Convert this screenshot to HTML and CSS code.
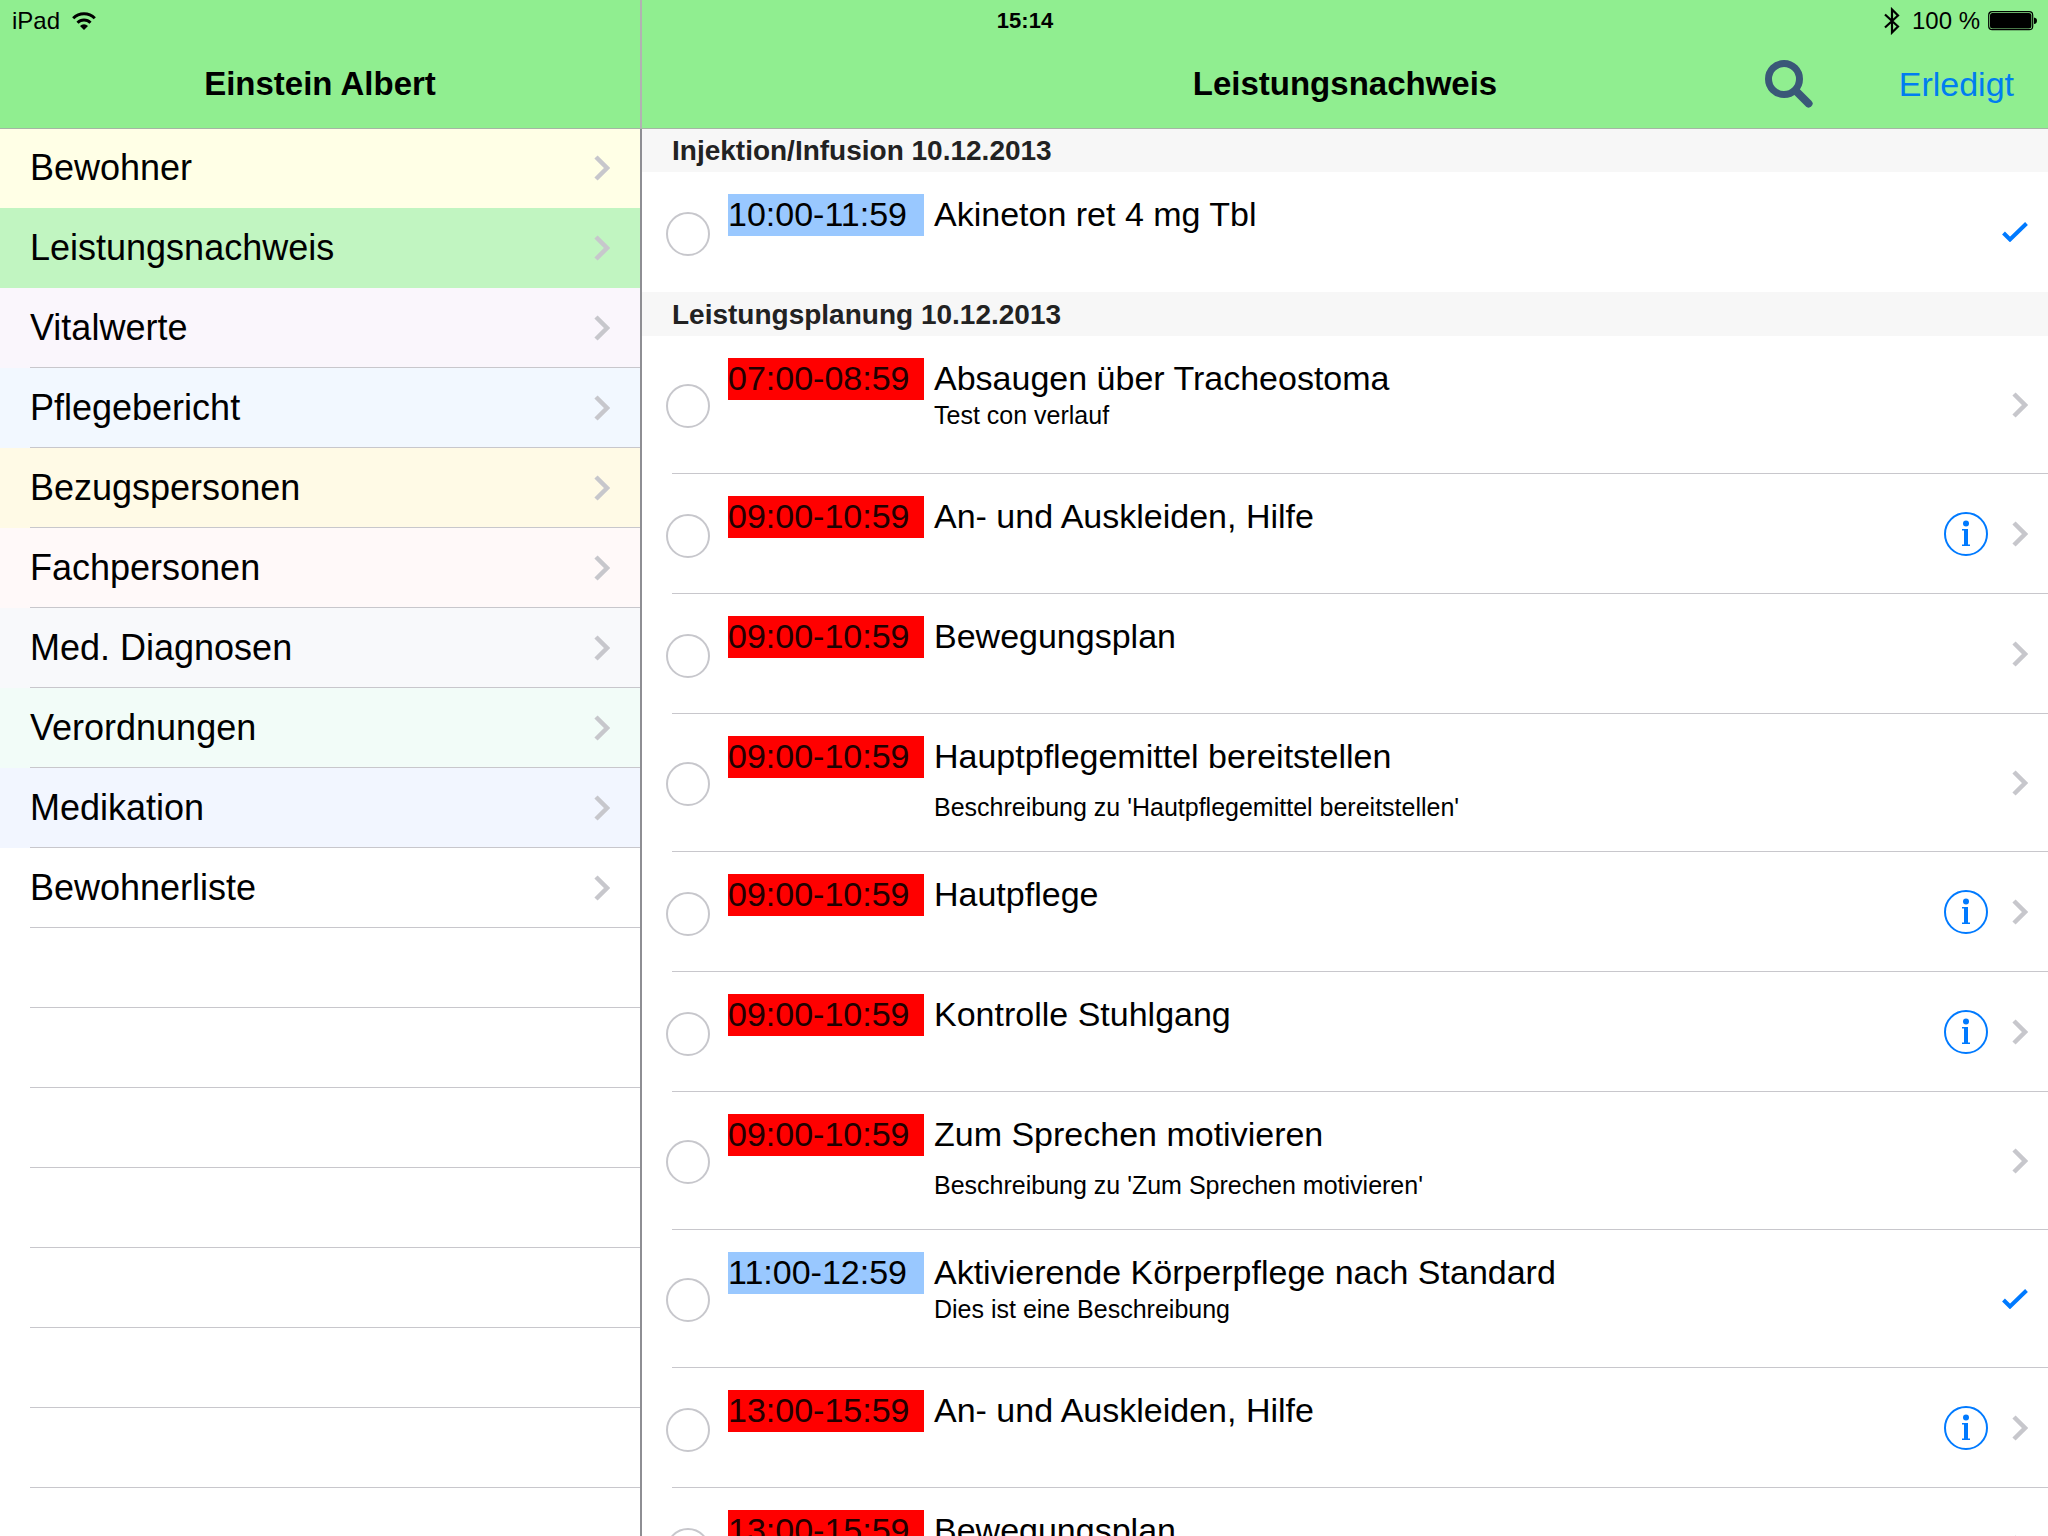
FILE: index.html
```html
<!DOCTYPE html>
<html lang="de">
<head>
<meta charset="utf-8">
<meta name="viewport" content="width=device-width, initial-scale=1">
<title>Leistungsnachweis</title>
<link rel="stylesheet" href="styles.css">
</head>
<body>
<svg class="sprite" aria-hidden="true">
  <symbol id="chevron" viewBox="0 0 16 26"><path d="M2 2l11 11L2 24" fill="none" stroke="currentColor" stroke-width="4.500"/></symbol>
  <symbol id="check" viewBox="0 0 26 20"><path d="M1.500 11l6.500 6.500L24.500 1.500" fill="none" stroke="currentColor" stroke-width="4"/></symbol>
  <symbol id="info" viewBox="0 0 44 44"><circle cx="22" cy="22" r="21" fill="none" stroke="currentColor" stroke-width="2"/><circle cx="22" cy="11.500" r="3" fill="currentColor"/><path d="M18 17h6v15.500h2V34h-8v-1.500h2V18.500h-2z" fill="currentColor"/></symbol>
</svg>

<div class="status">
  <div class="status-left">
    <span>iPad</span>
    <svg class="wifi" viewBox="0 0 24 18" aria-label="WLAN"><path d="M1.200 6.200a15.300 15.300 0 0 1 21.600 0M5.500 10.800a9.200 9.200 0 0 1 13 0" fill="none" stroke="#000" stroke-width="3"/><path d="M12 18l-4-4a5.700 5.700 0 0 1 8 0z"/></svg>
  </div>
  <time class="clock">15:14</time>
  <div class="status-right">
    <svg class="bluetooth" viewBox="0 0 16 28" aria-label="Bluetooth"><path d="M1 7.500l13 12L8 25.500V2.500l6 6-13 12" fill="none" stroke="#000" stroke-width="2.200"/></svg>
    <span>100 %</span>
    <svg class="battery" viewBox="0 0 50 20" aria-label="Batterie"><rect x=".7" y=".7" width="44" height="18" rx="3.500" fill="none" stroke="#000" stroke-width="1.200"/><rect x="2" y="2" width="41.400" height="15.400" rx="2.500"/><path d="M46 6.500q3 .5 3 3.300t-3 3.300z"/></svg>
  </div>
</div>

<div class="split">
  <aside class="sidebar">
    <header class="bar"><h2 class="bar-title">Einstein Albert</h2></header>
    <nav class="scroll">
      <ul class="menu">
        <li class="menu-row resident"><a href="#">Bewohner<svg class="chevron"><use href="#chevron"/></svg></a></li>
        <li class="menu-row selected"><a href="#" aria-current="page">Leistungsnachweis<svg class="chevron"><use href="#chevron"/></svg></a></li>
        <li class="menu-row vitals"><a href="#">Vitalwerte<svg class="chevron"><use href="#chevron"/></svg></a></li>
        <li class="menu-row report"><a href="#">Pflegebericht<svg class="chevron"><use href="#chevron"/></svg></a></li>
        <li class="menu-row contacts"><a href="#">Bezugspersonen<svg class="chevron"><use href="#chevron"/></svg></a></li>
        <li class="menu-row experts"><a href="#">Fachpersonen<svg class="chevron"><use href="#chevron"/></svg></a></li>
        <li class="menu-row diagnoses"><a href="#">Med. Diagnosen<svg class="chevron"><use href="#chevron"/></svg></a></li>
        <li class="menu-row orders"><a href="#">Verordnungen<svg class="chevron"><use href="#chevron"/></svg></a></li>
        <li class="menu-row medication"><a href="#">Medikation<svg class="chevron"><use href="#chevron"/></svg></a></li>
        <li class="menu-row"><a href="#">Bewohnerliste<svg class="chevron"><use href="#chevron"/></svg></a></li>
        <li class="menu-row" aria-hidden="true"></li>
        <li class="menu-row" aria-hidden="true"></li>
        <li class="menu-row" aria-hidden="true"></li>
        <li class="menu-row" aria-hidden="true"></li>
        <li class="menu-row" aria-hidden="true"></li>
        <li class="menu-row" aria-hidden="true"></li>
        <li class="menu-row" aria-hidden="true"></li>
        <li class="menu-row" aria-hidden="true"></li>
      </ul>
    </nav>
  </aside>

  <main class="detail">
    <header class="bar">
      <h1 class="bar-title">Leistungsnachweis</h1>
      <div class="bar-actions">
        <button class="search" type="button" aria-label="Suchen"><svg viewBox="0 0 48 48"><circle cx="19" cy="19" r="15.500" fill="none" stroke="#3a5878" stroke-width="7"/><path d="M31 31l12.500 12.500" fill="none" stroke="#3a5878" stroke-width="8" stroke-linecap="round"/></svg></button>
        <button class="done" type="button">Erledigt</button>
      </div>
    </header>
    <div class="scroll">
      <section>
        <h2 class="group-title">Injektion/Infusion 10.12.2013</h2>
        <ul class="tasks">
          <li class="task">
            <input class="tick" type="checkbox" id="t1">
            <label class="task-text" for="t1"><span class="slot ok">10:00-11:59</span><span class="name">Akineton ret 4 mg Tbl</span></label>
            <svg class="check" role="img" aria-label="Erledigt"><use href="#check"/></svg>
          </li>
        </ul>
      </section>
      <section>
        <h2 class="group-title">Leistungsplanung 10.12.2013</h2>
        <ul class="tasks">
          <li class="task tall">
            <input class="tick" type="checkbox" id="t2">
            <label class="task-text" for="t2"><span class="slot">07:00-08:59</span><span class="name">Absaugen über Tracheostoma</span><span class="note">Test con verlauf</span></label>
            <svg class="chevron"><use href="#chevron"/></svg>
          </li>
          <li class="task">
            <input class="tick" type="checkbox" id="t3">
            <label class="task-text" for="t3"><span class="slot">09:00-10:59</span><span class="name">An- und Auskleiden, Hilfe</span></label>
            <button class="info" type="button" aria-label="Info"><svg><use href="#info"/></svg></button>
            <svg class="chevron"><use href="#chevron"/></svg>
          </li>
          <li class="task">
            <input class="tick" type="checkbox" id="t4">
            <label class="task-text" for="t4"><span class="slot">09:00-10:59</span><span class="name">Bewegungsplan</span></label>
            <svg class="chevron"><use href="#chevron"/></svg>
          </li>
          <li class="task tall">
            <input class="tick" type="checkbox" id="t5">
            <label class="task-text" for="t5"><span class="slot">09:00-10:59</span><span class="name">Hauptpflegemittel bereitstellen</span><span class="note apart">Beschreibung zu 'Hautpflegemittel bereitstellen'</span></label>
            <svg class="chevron"><use href="#chevron"/></svg>
          </li>
          <li class="task">
            <input class="tick" type="checkbox" id="t6">
            <label class="task-text" for="t6"><span class="slot">09:00-10:59</span><span class="name">Hautpflege</span></label>
            <button class="info" type="button" aria-label="Info"><svg><use href="#info"/></svg></button>
            <svg class="chevron"><use href="#chevron"/></svg>
          </li>
          <li class="task">
            <input class="tick" type="checkbox" id="t7">
            <label class="task-text" for="t7"><span class="slot">09:00-10:59</span><span class="name">Kontrolle Stuhlgang</span></label>
            <button class="info" type="button" aria-label="Info"><svg><use href="#info"/></svg></button>
            <svg class="chevron"><use href="#chevron"/></svg>
          </li>
          <li class="task tall">
            <input class="tick" type="checkbox" id="t8">
            <label class="task-text" for="t8"><span class="slot">09:00-10:59</span><span class="name">Zum Sprechen motivieren</span><span class="note apart">Beschreibung zu 'Zum Sprechen motivieren'</span></label>
            <svg class="chevron"><use href="#chevron"/></svg>
          </li>
          <li class="task tall">
            <input class="tick" type="checkbox" id="t9">
            <label class="task-text" for="t9"><span class="slot ok">11:00-12:59</span><span class="name">Aktivierende Körperpflege nach Standard</span><span class="note">Dies ist eine Beschreibung</span></label>
            <svg class="check" role="img" aria-label="Erledigt"><use href="#check"/></svg>
          </li>
          <li class="task">
            <input class="tick" type="checkbox" id="t10">
            <label class="task-text" for="t10"><span class="slot">13:00-15:59</span><span class="name">An- und Auskleiden, Hilfe</span></label>
            <button class="info" type="button" aria-label="Info"><svg><use href="#info"/></svg></button>
            <svg class="chevron"><use href="#chevron"/></svg>
          </li>
          <li class="task">
            <input class="tick" type="checkbox" id="t11">
            <label class="task-text" for="t11"><span class="slot">13:00-15:59</span><span class="name">Bewegungsplan</span></label>
            <svg class="chevron"><use href="#chevron"/></svg>
          </li>
        </ul>
      </section>
    </div>
  </main>
</div>
</body>
</html>
```
FILE: styles.css
```css
* {
  box-sizing: border-box;
}

body {
  margin: 0;
  background: #fff;
  color: #000;
  font: 34px/42px "Liberation Sans", Arial, sans-serif;
}

h1, h2, ul {
  margin: 0;
  padding: 0;
}

ul {
  list-style: none;
}

button {
  padding: 0;
  border: 0;
  background: none;
  font: inherit;
  cursor: pointer;
}

svg {
  display: block;
}

.sprite {
  display: none;
}

/* Status bar, floating over both navigation bars */
.status {
  position: absolute;
  z-index: 2;
  top: 0;
  left: 0;
  right: 0;
  display: grid;
  grid-template-columns: 1fr auto 1fr;
  align-items: center;
  height: 40px;
  padding: 0 10px 0 12px;
  font-size: 24px;
  line-height: 42px;
}

.status-left,
.status-right {
  display: flex;
  align-items: center;
}

.status-left {
  gap: 12px;
}

.status-right {
  justify-content: flex-end;
  gap: 8px;
}

.clock {
  font-size: 22px;
  font-weight: bold;
}

.wifi {
  width: 24px;
  height: 18px;
}

.bluetooth {
  width: 16px;
  height: 28px;
  margin-right: 4px;
}

.battery {
  width: 50px;
  height: 20px;
}

/* Split view */
.split {
  display: grid;
  grid-template-columns: 5fr 11fr;
  height: 100vh;
}

.sidebar,
.detail {
  display: flex;
  flex-direction: column;
  min-width: 0;
  min-height: 0;
}

.detail {
  border-left: 2px solid #8e8e93;
}

.scroll {
  flex: 1;
  min-height: 0;
  overflow-y: auto;
  scrollbar-width: none;
}

.bar {
  position: relative;
  z-index: 1;
  display: grid;
  grid-template-columns: 1fr auto 1fr;
  align-items: center;
  flex: none;
  height: 128px;
  padding: 40px 34px 0 0;
  background: #90ee90;
  box-shadow: 0 1px #a5b5a5;
}

.sidebar .bar {
  padding-right: 0;
}

.detail .bar {
  margin-left: -2px;
  border-left: 2px solid #b2b2b2;
  padding-left: 34px;
}

.bar-title {
  grid-column: 2;
  font-size: 33px;
  font-weight: bold;
  line-height: 44px;
}

.bar-actions {
  display: flex;
  align-items: center;
  justify-content: flex-end;
  gap: 86px;
}

.search svg {
  width: 48px;
  height: 48px;
}

.done {
  color: #007df0;
}

/* Menu */
.menu-row {
  height: 80px;
  font-size: 36px;
  background: linear-gradient(#c8c7cc, #c8c7cc) 30px 100% / 100% 1px no-repeat;
}

.menu-row a {
  display: flex;
  align-items: center;
  justify-content: space-between;
  height: 100%;
  padding: 0 30px;
  color: inherit;
  text-decoration: none;
}

.menu-row.resident,
.menu-row.selected {
  background-image: none;
}

.resident { background-color: #ffffe6; }
.selected { background-color: #c1f5c1; }
.vitals { background-color: #faf6fc; }
.report { background-color: #f2f8ff; }
.contacts { background-color: #fffae6; }
.experts { background-color: #fff9f9; }
.diagnoses { background-color: #f8f9fb; }
.orders { background-color: #f2fcf8; }
.medication { background-color: #f2f6ff; }

.chevron {
  flex: none;
  width: 16px;
  height: 26px;
  color: #c7c7cc;
}

/* Task list */
.group-title {
  height: 44px;
  padding-left: 30px;
  background: #f7f7f7;
  color: #222;
  font-size: 28px;
  font-weight: bold;
  line-height: 46px;
}

.task {
  display: flex;
  align-items: center;
  min-height: 120px;
  padding: 0 20px 0 24px;
  background: linear-gradient(#c8c7cc, #c8c7cc) 30px 100% / 100% 1px no-repeat;
}

.task.tall {
  min-height: 138px;
}

.task:only-child {
  background: none;
}

.tick {
  appearance: none;
  flex: none;
  width: 44px;
  height: 44px;
  margin: 4px 18px 0 0;
  border: 2px solid #c7c7cc;
  border-radius: 50%;
}

.tall .tick {
  margin-top: 2px;
}

.tick:checked {
  background: #007aff;
}

.task-text {
  display: grid;
  grid-template-columns: 196px 1fr;
  column-gap: 10px;
  align-self: flex-start;
  flex: 1;
  min-width: 0;
  padding-top: 22px;
}

.slot {
  height: 42px;
  background: #f00;
  color: #200;
  line-height: 40px;
}

.slot.ok {
  background: #99c8ff;
  color: #000;
}

.name {
  line-height: 40px;
}

.note {
  grid-column: 2;
  font-size: 25px;
  line-height: 30px;
}

.note.apart {
  margin-top: 14px;
}

.info {
  margin-right: 24px;
  color: #007aff;
}

.info svg {
  width: 44px;
  height: 44px;
}

.check {
  flex: none;
  width: 26px;
  height: 20px;
  color: #007aff;
}
```
